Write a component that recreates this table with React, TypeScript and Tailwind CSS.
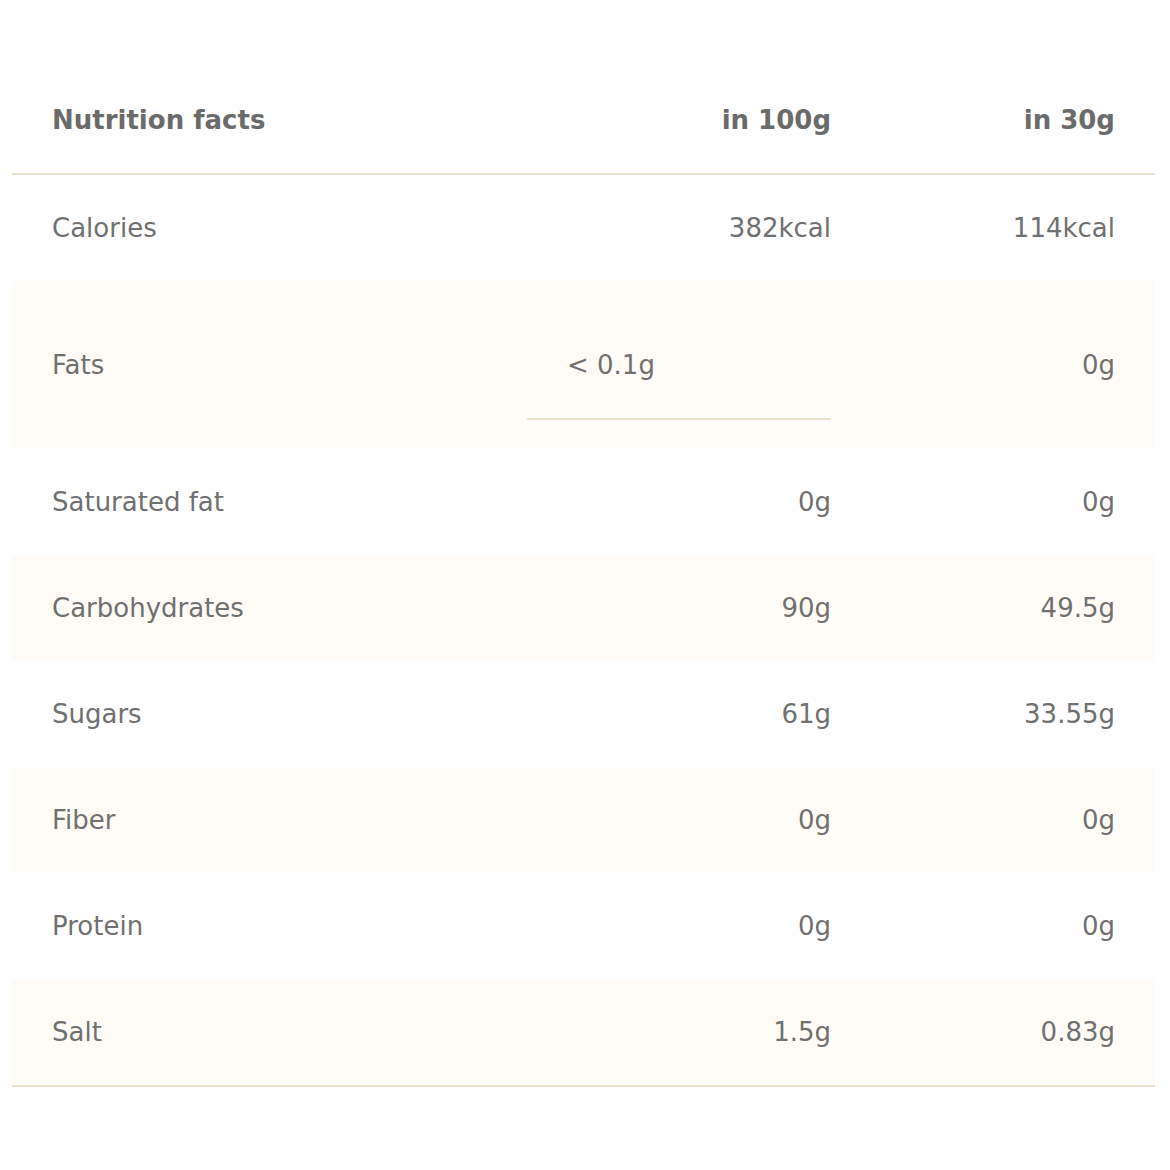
const ROWS: { name: string; per100: string; per30: string }[] = [
  { name: 'Calories', per100: '382kcal', per30: '114kcal' },
  { name: 'Fats', per100: '< 0.1g', per30: '0g' },
  { name: 'Saturated fat', per100: '0g', per30: '0g' },
  { name: 'Carbohydrates', per100: '90g', per30: '49.5g' },
  { name: 'Sugars', per100: '61g', per30: '33.55g' },
  { name: 'Fiber', per100: '0g', per30: '0g' },
  { name: 'Protein', per100: '0g', per30: '0g' },
  { name: 'Salt', per100: '1.5g', per30: '0.83g' },
]

const App = () => {
  return (
    <div
      className="min-h-[1170px] bg-white pt-[67px] pl-3 text-[26px] text-[#707070]"
      style={{ fontFamily: '"DejaVu Sans", "Noto Sans", sans-serif' }}
    >
      <div className="w-[1143px]">
        {/* Header */}
        <div className="grid h-[108px] grid-cols-[475px_384px_284px] border-b-2 border-[#ece0cd] font-bold text-[#6b6b6b]">
          <div className="flex items-center px-10">Nutrition facts</div>
          <div className="flex items-center justify-end px-10">in 100g</div>
          <div className="flex items-center justify-end px-10">in 30g</div>
        </div>

        {ROWS.map((row, i) => {
          const striped = i % 2 === 1
          const isFats = row.name === 'Fats'
          const isLast = i === ROWS.length - 1
          return (
            <div
              key={row.name}
              className={`grid grid-cols-[475px_384px_284px] ${isFats ? 'h-[168px]' : isLast ? 'h-[108px] border-b-2 border-[#ece0cd]' : 'h-[106px]'} ${striped ? 'bg-[#fffcf7]' : 'bg-white'}`}
            >
              <div className="flex items-center px-10">{row.name}</div>
              {isFats ? (
                <div className="flex px-10 pt-[31px] pb-[29px]">
                  <div className="flex flex-1 items-center border-b-2 border-[#ece0cd] pl-10">{row.per100}</div>
                </div>
              ) : (
                <div className="flex items-center justify-end px-10">{row.per100}</div>
              )}
              <div className="flex items-center justify-end px-10">{row.per30}</div>
            </div>
          )
        })}
      </div>
    </div>
  )
}

export default App
